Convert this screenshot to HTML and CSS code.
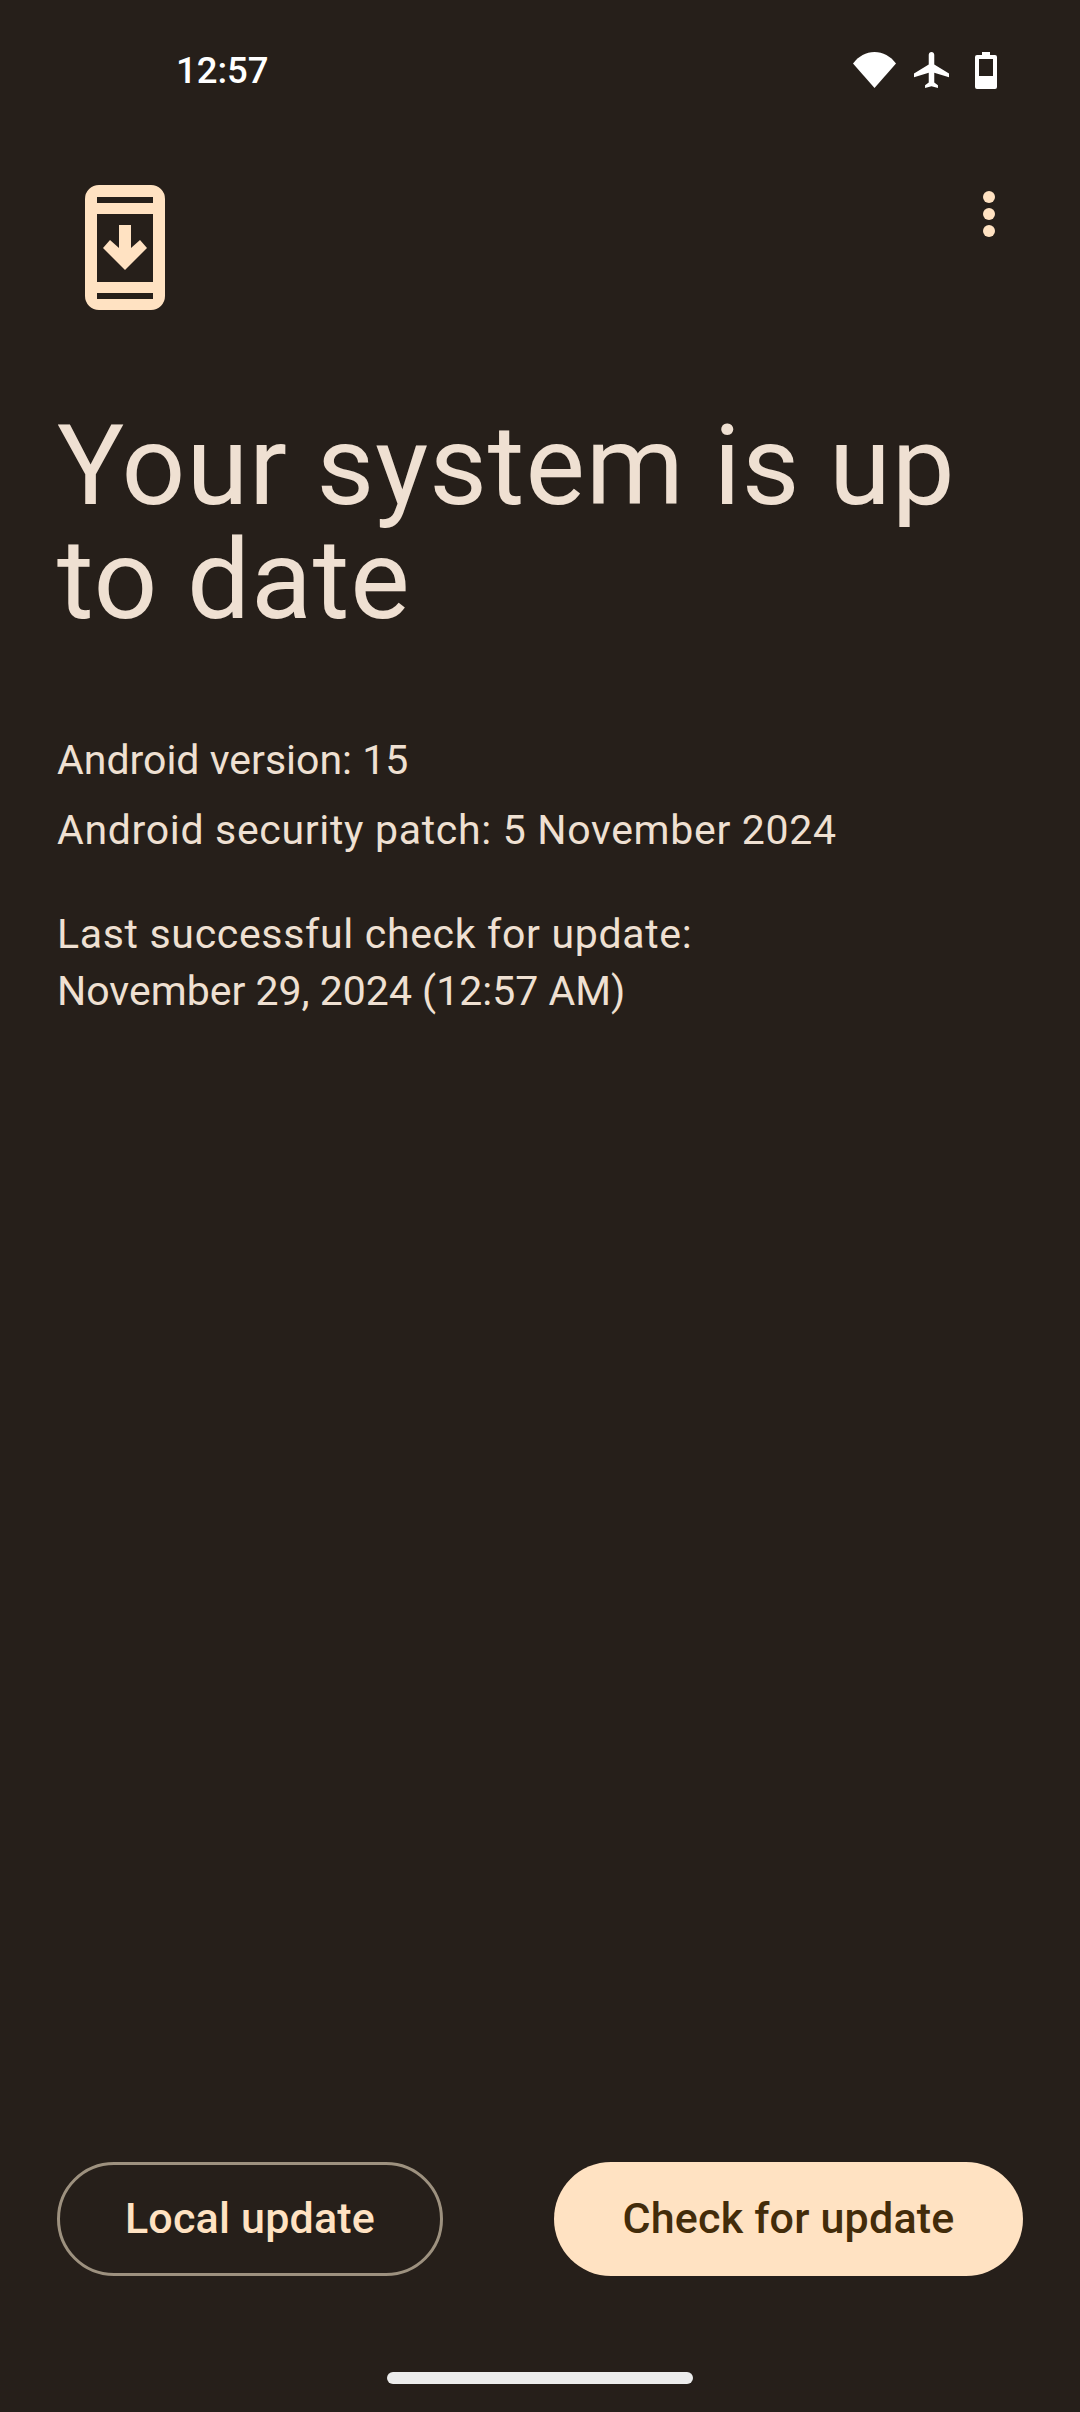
FILE: index.html
```html
<!DOCTYPE html>
<html lang="en">

<head>
    <meta charset="UTF-8">
    <meta name="viewport" content="width=device-width, initial-scale=1.0">
    <title>System update</title>
    <link rel="stylesheet" href="styles.css">
</head>

<body>
    <div class="screen">
        <div class="status">
            <span class="time">12:57</span>
            <div class="status-icons">
                <svg class="wifi" width="43" height="36" viewBox="0 0 43 36">
                    <path d="M21.5 36L0 11.5C5.5 4.2 13 0 21.5 0S37.500 4.200 43 11.500Z" fill="#fff"/>
                </svg>
                <svg class="plane" width="35" height="36" viewBox="2 2 19 20" preserveAspectRatio="none">
                    <path d="M21 16v-2l-8-5V3.500C13 2.670 12.330 2 11.500 2S10 2.670 10 3.500V9l-8 5v2l8-2.500V19l-2 1.500V22l3.500-1 3.500 1v-1.500L13 19v-5.500l8 2.500z" fill="#fff"/>
                </svg>
                <svg class="battery" width="22" height="37" viewBox="0 0 22 37">
                    <path fill-rule="evenodd" d="M7 0h8v3h5a2 2 0 0 1 2 2v30a2 2 0 0 1-2 2H2a2 2 0 0 1-2-2V5a2 2 0 0 1 2-2h5zM4 7v17h14V7z" fill="#fff"/>
                </svg>
            </div>
        </div>

        <div class="top-row">
            <svg class="update-icon" width="80" height="125" viewBox="0 0 80 125">
                <path fill-rule="evenodd" d="M14 0h52a14 14 0 0 1 14 14v97a14 14 0 0 1-14 14H14a14 14 0 0 1-14-14V14A14 14 0 0 1 14 0zM12 12v6h56v-6zM12 29v68h56V29zM12 108v6h56v-6z" fill="#ffe2c2"/>
                <path d="M34 40h12v23l9-8 7 8-22 22-22-22 7-8 9 8z" fill="#ffe2c2"/>
            </svg>
            <div class="menu">
                <span class="dot"></span>
                <span class="dot"></span>
                <span class="dot"></span>
            </div>
        </div>

        <h1 class="title">Your system is up to date</h1>

        <div class="info">
            <p class="line tight">Android version: 15</p>
            <p class="line">Android security patch: 5 November 2024</p>
            <p class="check">Last successful check for update:<br><span class="tight">November 29, 2024 (12:57 AM)</span></p>
        </div>

        <div class="actions">
            <button class="btn btn-outline">Local update</button>
            <button class="btn btn-fill">Check for update</button>
        </div>

        <div class="home-bar"></div>
    </div>
</body>

</html>
```

FILE: styles.css
```css
* {
    box-sizing: border-box;
}

body {
    margin: 0;
    background-color: #261f1a;
    font-family: "Roboto", "Noto Sans", sans-serif;
}

.screen {
    width: 1080px;
    height: 2412px;
    display: flex;
    flex-direction: column;
    overflow: hidden;
}

.status {
    display: flex;
    justify-content: space-between;
    align-items: center;
    height: 38px;
    margin-top: 51px;
    padding-left: 176px;
    padding-right: 83px;
}

.time {
    color: #ffffff;
    font-size: 36.5px;
    font-weight: 500;
}

.status-icons {
    display: flex;
    align-items: center;
    gap: 18px;
}

.battery {
    margin-left: 8px;
}

.top-row {
    display: flex;
    justify-content: space-between;
    align-items: flex-start;
    margin-top: 96px;
    padding-left: 85px;
    padding-right: 85px;
}

.menu {
    display: flex;
    flex-direction: column;
    gap: 5px;
    margin-top: 6px;
}

.dot {
    width: 12px;
    height: 12px;
    border-radius: 50%;
    background-color: #ffe2c2;
}

.title {
    margin: 99px 0 0;
    padding: 0 57px;
    color: #efe0d2;
    font-size: 112px;
    font-weight: 400;
    line-height: 114px;
    letter-spacing: 0.9px;
}

.info {
    margin-top: 99px;
    padding: 0 57px;
    color: #efe0d2;
    font-size: 41px;
    letter-spacing: 0.68px;
}

.tight {
    letter-spacing: 0;
}

.line {
    margin: 0 0 22px;
    line-height: 48px;
}

.check {
    margin: 52px 0 0;
    line-height: 57px;
}

.actions {
    display: flex;
    justify-content: space-between;
    margin-top: auto;
    padding: 0 57px;
}

.btn {
    height: 114px;
    border-radius: 57px;
    font-family: inherit;
    font-size: 43px;
    font-weight: 500;
    letter-spacing: 0.2px;
    padding: 0 0 2px;
}

.btn-outline {
    width: 386px;
    background: none;
    border: 3px solid #9d917f;
    color: #ffe2c2;
}

.btn-fill {
    width: 469px;
    background-color: #ffe2c2;
    border: none;
    color: #432c0a;
}

.home-bar {
    width: 306px;
    height: 12px;
    border-radius: 6px;
    background-color: #ececec;
    margin: 96px auto 28px;
}
```
